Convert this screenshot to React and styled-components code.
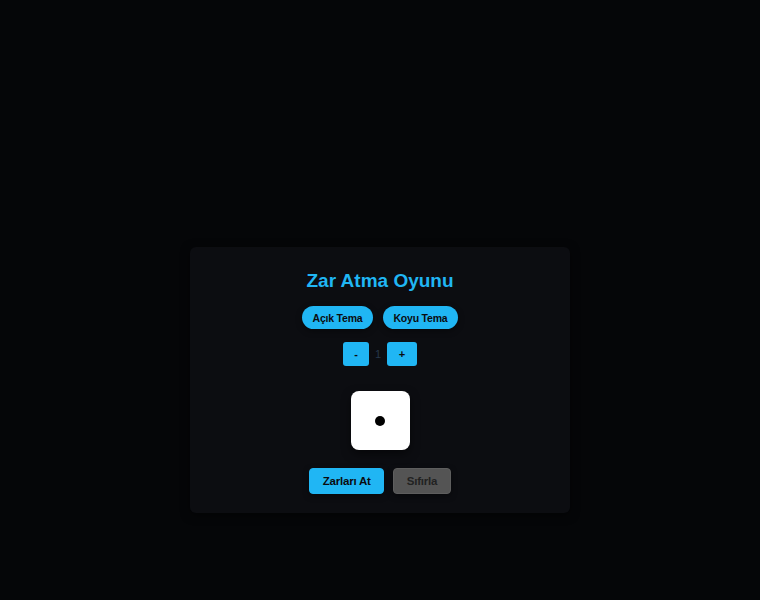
import React, { useState } from "react";
import styled, { createGlobalStyle } from "styled-components";

const Global = createGlobalStyle`
  html, body { margin: 0; padding: 0; background: #050608; }
  body { font-family: "Liberation Sans", Arial, sans-serif; }
  * { box-sizing: border-box; }
`;

const Page = styled.div`
  min-height: 600px;
  display: flex;
  justify-content: center;
  align-items: flex-start;
  padding-top: 247px;
`;

const Card = styled.div`
  width: 380px;
  background: #0c0d11;
  border-radius: 6px;
  box-shadow: 0 2px 10px rgba(0, 0, 0, 0.5);
  padding: 23px 20px 19px;
  display: flex;
  flex-direction: column;
  align-items: center;
`;

const Title = styled.h1`
  margin: 0;
  font-size: 19px;
  line-height: 22px;
  font-weight: 700;
  color: #20b6f4;
`;

const Row = styled.div`
  display: flex;
  align-items: center;
  justify-content: center;
  gap: ${(p) => p.$gap || 10}px;
  margin-top: ${(p) => p.$mt || 0}px;
`;

const PillButton = styled.button`
  height: 23px;
  padding: 0 10.5px;
  border: none;
  border-radius: 12px;
  background: #20b6f4;
  color: #0b0c10;
  font-family: inherit;
  font-size: 10.5px;
  font-weight: 700;
  letter-spacing: -0.2px;
  box-shadow: 0 2px 6px rgba(0, 0, 0, 0.4);
  cursor: pointer;
`;

const StepButton = styled.button`
  height: 24px;
  min-width: ${(p) => p.$w}px;
  padding: 0;
  border: none;
  border-radius: 3px;
  background: #20b6f4;
  color: #0b0c10;
  font-family: inherit;
  font-size: 11px;
  font-weight: 700;
  cursor: pointer;
`;

const Count = styled.span`
  font-size: 11px;
  color: #27384a;
  width: 8px;
  text-align: center;
`;

const Die = styled.div`
  width: 59px;
  height: 59px;
  border-radius: 8px;
  background: #ffffff;
  display: flex;
  align-items: center;
  justify-content: center;
  box-shadow: 0 4px 10px rgba(0, 0, 0, 0.5);
`;

const Pip = styled.span`
  width: 10px;
  height: 10px;
  border-radius: 50%;
  background: #000;
`;

const ActionButton = styled.button`
  height: 26px;
  padding: 0 12.5px;
  border: 1px solid ${(p) => (p.$muted ? "#5e5e5e" : "#20b6f4")};
  border-radius: 4px;
  background: ${(p) => (p.$muted ? "#545454" : "#20b6f4")};
  color: ${(p) => (p.$muted ? "#222" : "#0b0c10")};
  font-family: inherit;
  font-size: 11.5px;
  font-weight: 700;
  letter-spacing: -0.2px;
  box-shadow: 0 2px 6px rgba(0, 0, 0, 0.4);
  cursor: pointer;
`;

export default function App() {
  const [count, setCount] = useState(1);
  return (
    <>
      <Global />
      <Page>
        <Card>
          <Title>Zar Atma Oyunu</Title>
          <Row $mt={14} $gap={10}>
            <PillButton>Açık Tema</PillButton>
            <PillButton>Koyu Tema</PillButton>
          </Row>
          <Row $mt={13} $gap={5}>
            <StepButton $w={26} onClick={() => setCount(Math.max(1, count - 1))}>-</StepButton>
            <Count>{count}</Count>
            <StepButton $w={30} onClick={() => setCount(count + 1)}>+</StepButton>
          </Row>
          <Row $mt={25}>
            <Die>
              <Pip />
            </Die>
          </Row>
          <Row $mt={18} $gap={9}>
            <ActionButton>Zarları At</ActionButton>
            <ActionButton $muted>Sıfırla</ActionButton>
          </Row>
        </Card>
      </Page>
    </>
  );
}
